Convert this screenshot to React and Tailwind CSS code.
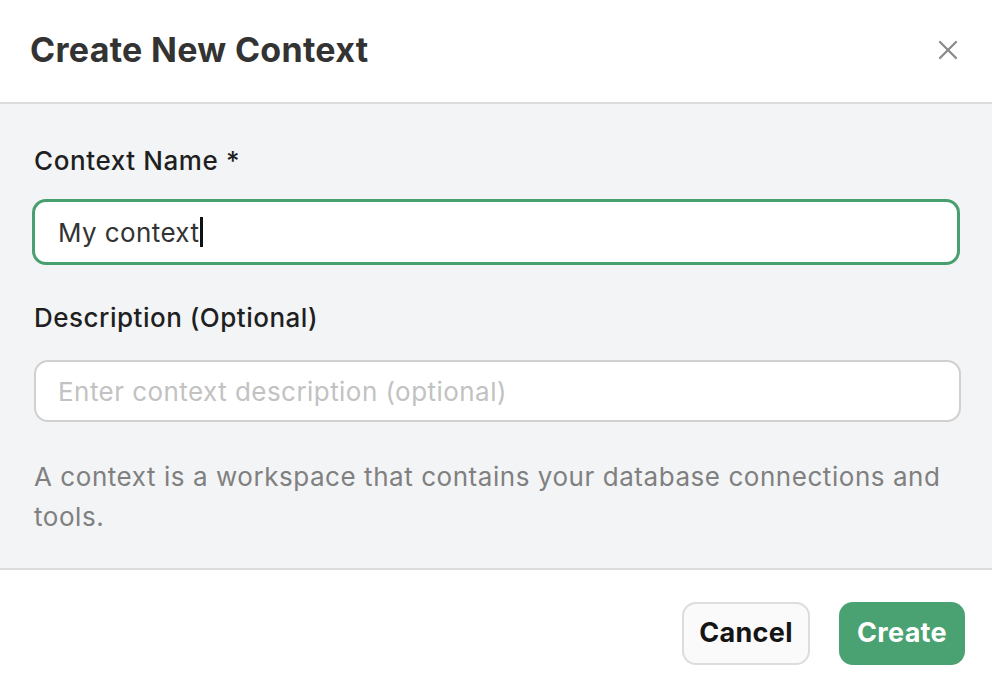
import React, { useState } from "react";
import { X } from "lucide-react";

export default function App() {
    const [name, setName] = useState("My context");
    const [description, setDescription] = useState("");

    return (
        <div className="w-[992px] h-[690px] bg-white flex flex-col overflow-hidden" style={{ fontFamily: "Inter, 'Noto Sans', sans-serif" }}>
            {/* Header */}
            <div className="h-[104px] shrink-0 flex items-center justify-between pl-[30px] pr-[32px] border-b-2 border-[#dcdcdc]">
                <h2 className="text-[34px] font-bold text-[#333333] tracking-[0.3px] pb-[4px]">Create New Context</h2>
                <button className="text-[#8a8a8a] -mr-[4px] mb-[2px]">
                    <X size={32} strokeWidth={1.7} />
                </button>
            </div>

            {/* Body */}
            <div className="h-[466px] shrink-0 bg-[#f3f4f6] border-b-2 border-[#dcdcdc] px-[32px] pt-[39px]">
                <label className="block pl-[2px] text-[26px] font-medium text-[#1f1f1f] leading-[36px] tracking-[0.6px]">Context Name *</label>
                <div className="relative mt-[20px]">
                    <input
                        value={name}
                        onChange={(e) => setName(e.target.value)}
                        className="w-full h-[66px] rounded-[14px] border-[3px] border-[#4a9f6f] bg-white px-[23px] text-[26px] tracking-[0.4px] text-[#333333] outline-none"
                    />
                    {/* text caret */}
                    <span className="absolute left-[168px] top-[18px] w-[3px] h-[30px] bg-[#111111]" />
                </div>

                <label className="block mt-[35px] pl-[2px] text-[26px] font-medium text-[#1f1f1f] leading-[36px] tracking-[0.5px]">Description (Optional)</label>
                <input
                    value={description}
                    onChange={(e) => setDescription(e.target.value)}
                    placeholder="Enter context description (optional)"
                    className="mt-[24px] ml-[2px] w-[927px] h-[62px] rounded-[14px] border-2 border-[#d0d0d0] bg-white px-[22px] text-[26px] tracking-[0.45px] text-[#333333] placeholder:text-[#c2c2c2] outline-none"
                />

                <p className="mt-[35px] pl-[2px] text-[26px] leading-[40px] tracking-[0.55px] text-[#808080]">
                    A context is a workspace that contains your database connections and tools.
                </p>
            </div>

            {/* Footer */}
            <div className="flex-1 flex justify-end items-start gap-[29px] pt-[32px] pr-[27px]">
                <button className="h-[63px] w-[128px] rounded-[14px] border-2 border-[#dddddd] bg-[#fafafa] text-[27px] font-bold tracking-[0.3px] text-[#151515]">
                    Cancel
                </button>
                <button className="h-[63px] w-[126px] rounded-[14px] bg-[#4aa272] text-[27px] font-bold tracking-[0.3px] text-white">
                    Create
                </button>
            </div>
        </div>
    );
}
